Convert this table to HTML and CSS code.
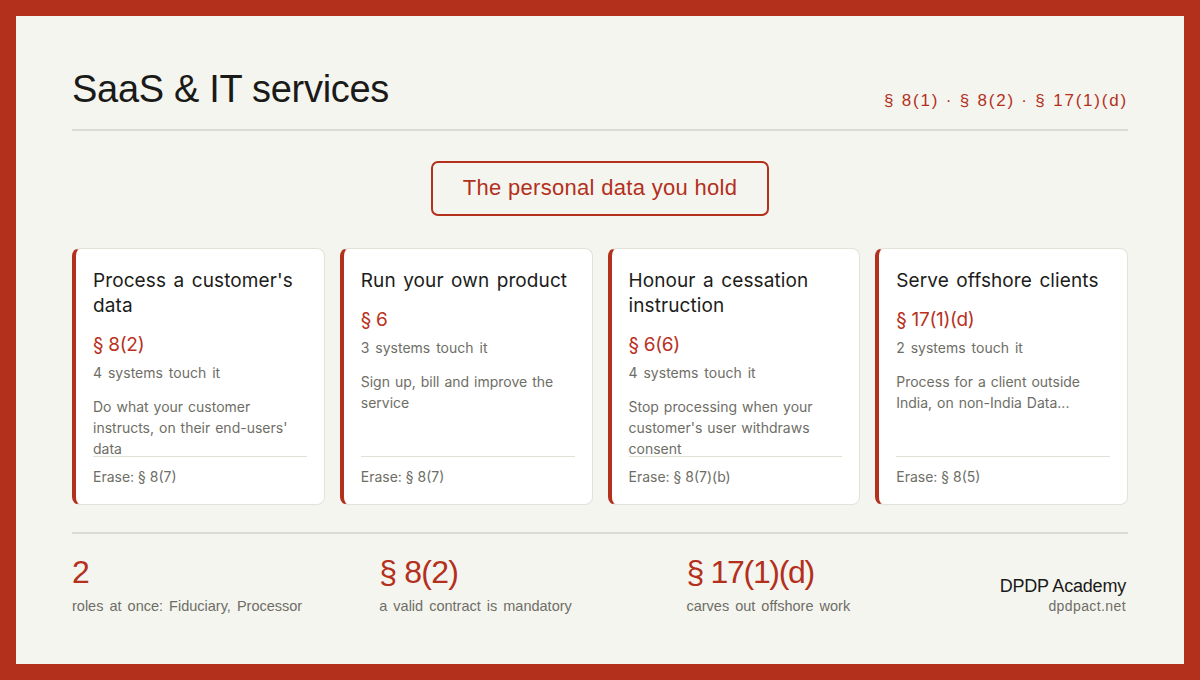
FILE: index.html
```html
<!DOCTYPE html>
<html lang="en">
<head>
<meta charset="utf-8">
<title>SaaS &amp; IT services</title>
<link rel="stylesheet" href="styles.css">
</head>
<body>
<div class="frame">
  <main class="panel">
    <header class="head">
      <h1 class="title">SaaS &amp; IT services</h1>
      <div class="refs">§ 8(1) · § 8(2) · § 17(1)(d)</div>
    </header>

    <div class="pill-row">
      <div class="pill">The personal data you hold</div>
    </div>

    <section class="cards">
      <article class="card">
        <h2 class="card-title">Process a customer's data</h2>
        <div class="card-sec">§ 8(2)</div>
        <div class="card-sys">4 systems touch it</div>
        <p class="card-desc">Do what your customer instructs, on their end-users' data</p>
        <div class="card-foot">Erase: § 8(7)</div>
      </article>
      <article class="card">
        <h2 class="card-title">Run your own product</h2>
        <div class="card-sec">§ 6</div>
        <div class="card-sys">3 systems touch it</div>
        <p class="card-desc">Sign up, bill and improve the service</p>
        <div class="card-foot">Erase: § 8(7)</div>
      </article>
      <article class="card">
        <h2 class="card-title">Honour a cessation instruction</h2>
        <div class="card-sec">§ 6(6)</div>
        <div class="card-sys">4 systems touch it</div>
        <p class="card-desc">Stop processing when your customer's user withdraws consent</p>
        <div class="card-foot">Erase: § 8(7)(b)</div>
      </article>
      <article class="card">
        <h2 class="card-title">Serve offshore clients</h2>
        <div class="card-sec">§ 17(1)(d)</div>
        <div class="card-sys">2 systems touch it</div>
        <p class="card-desc">Process for a client outside India, on non-India Data...</p>
        <div class="card-foot">Erase: § 8(5)</div>
      </article>
    </section>

    <footer class="stats">
      <div class="stat">
        <div class="stat-num">2</div>
        <div class="stat-label">roles at once: Fiduciary, Processor</div>
      </div>
      <div class="stat">
        <div class="stat-num">§ 8(2)</div>
        <div class="stat-label">a valid contract is mandatory</div>
      </div>
      <div class="stat">
        <div class="stat-num stat-num-long">§ 17(1)(d)</div>
        <div class="stat-label">carves out offshore work</div>
      </div>
      <div class="brand">
        <div class="brand-name">DPDP Academy</div>
        <div class="brand-url">dpdpact.net</div>
      </div>
    </footer>
  </main>
</div>
</body>
</html>
```

FILE: styles.css
```css
* { box-sizing: border-box; }

html, body {
  margin: 0;
  padding: 0;
}

body {
  width: 1200px;
  height: 680px;
  background: #b3301c;
  font-family: "Liberation Sans", Arial, sans-serif;
  color: #1c1c1a;
}

.frame {
  padding: 16px;
  height: 680px;
}

.panel {
  background: #f5f5f0;
  height: 648px;
  padding: 0 56px;
  display: flex;
  flex-direction: column;
}

/* header */
.head {
  display: flex;
  justify-content: space-between;
  align-items: flex-end;
  padding-top: 51px;
  padding-bottom: 18px;
  border-bottom: 2px solid #dcdbd3;
}

.title {
  margin: 0;
  font-size: 38px;
  font-weight: 400;
  letter-spacing: -0.3px;
  line-height: 44px;
  color: #1a1a18;
}

.refs {
  font-size: 17px;
  letter-spacing: 1.8px;
  color: #b3301c;
  line-height: 20px;
  margin-bottom: 0;
}

/* pill */
.pill-row {
  display: flex;
  justify-content: center;
  padding-top: 30px;
}

.pill {
  border: 2px solid #b3301c;
  border-radius: 7px;
  padding: 13px 30px 14px;
  font-size: 22px;
  line-height: 24px;
  letter-spacing: 0.3px;
  color: #b3301c;
  background: #f5f5f0;
}

/* cards */
.cards {
  display: grid;
  grid-template-columns: repeat(4, 1fr);
  gap: 15px;
  margin-top: 32px;
}

.card {
  height: 257px;
  background: #ffffff;
  border: 1px solid #e3e1d9;
  border-left: 4px solid #b3301c;
  border-radius: 8px;
  padding: 19px 17px 17px;
  display: flex;
  flex-direction: column;
  font-family: Inter, "Liberation Sans", sans-serif;
}

.card-title {
  margin: 0;
  font-size: 19px;
  font-weight: 400;
  line-height: 25px;
  color: #1c1c1a;
  letter-spacing: 0.1px;
  word-spacing: 2px;
}

.card-sec {
  margin-top: 14px;
  font-size: 19px;
  line-height: 25px;
  color: #b8321e;
  letter-spacing: -0.3px;
}

.card-sys {
  margin-top: 6px;
  font-size: 14px;
  line-height: 20px;
  color: #6e6e66;
  word-spacing: 2px;
}

.card-desc {
  margin: 13px 0 0;
  font-size: 14px;
  line-height: 21px;
  color: #6e6e66;
  flex: 1 1 auto;
  min-height: 0;
  word-spacing: 1px;
}

.card-foot {
  flex: none;
  border-top: 1px solid #e3e1d6;
  padding-top: 10px;
  font-size: 14px;
  line-height: 20px;
  color: #6e6e66;
}

/* stats */
.stats {
  margin-top: 27px;
  border-top: 2px solid #dcdbd3;
  padding-top: 21px;
  display: flex;
  align-items: flex-end;
}

.stat {
  flex: 1 1 0;
}

.stat-num {
  font-size: 32px;
  line-height: 34px;
  color: #b3301c;
  letter-spacing: -0.8px;
}

.stat-num-long {
  letter-spacing: -1.3px;
}

.stat-label {
  margin-top: 8px;
  font-size: 14.5px;
  line-height: 18px;
  color: #6e6e66;
  word-spacing: 2px;
}

.brand {
  flex: none;
  text-align: right;
  padding-left: 6px;
  padding-right: 2px;
}

.brand-name {
  font-size: 18px;
  line-height: 20px;
  color: #1a1a18;
  letter-spacing: -0.2px;
}

.brand-url {
  font-size: 14px;
  line-height: 18px;
  color: #6e6e66;
  letter-spacing: 0.4px;
  margin-top: 1px;
}
```
